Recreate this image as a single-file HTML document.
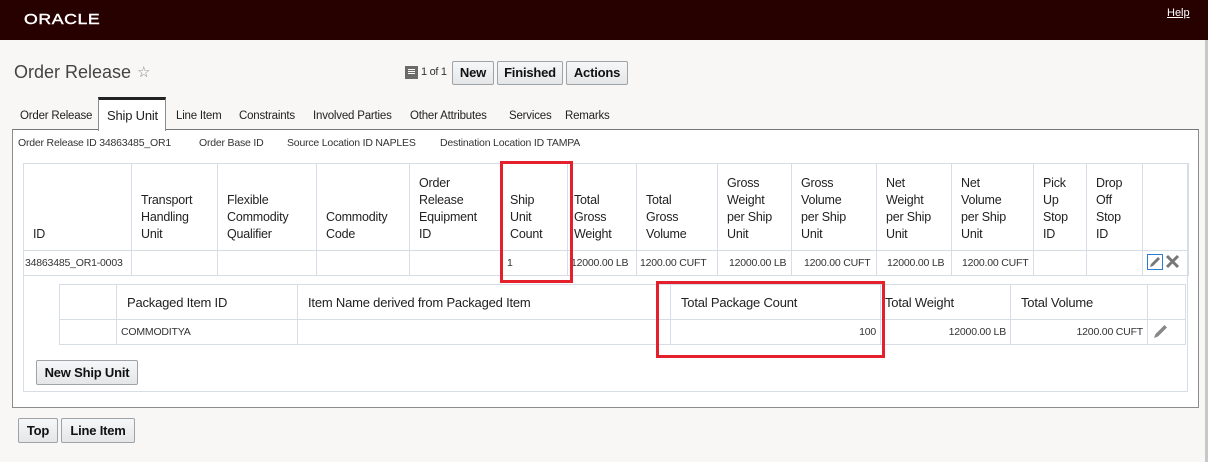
<!DOCTYPE html>
<html><head><meta charset="utf-8">
<style>
*{box-sizing:border-box;margin:0;padding:0}
body{width:1208px;height:462px;background:#f8f7f6;font-family:"Liberation Sans",sans-serif;color:#333;position:relative;overflow:hidden}
.a{position:absolute}
.hdr{left:0;top:0;width:1208px;height:40px;background:#270000}
.logo{left:24px;top:11px;color:#fff;font-size:15px;letter-spacing:0.5px;transform:scaleX(1.18);transform-origin:left;-webkit-text-stroke:0.4px #fff}
.help{left:1167px;top:7px;color:#fff;font-size:11px;text-decoration:underline}
.rb{left:1205px;top:40px;width:3px;height:422px;background:#c8c8c8}
.btn{position:absolute;background:linear-gradient(#f6f7f8,#e4e6e8);border:1px solid #9ea3a7;border-radius:2px;font-weight:bold;font-size:13px;color:#111;text-align:center;line-height:22px;letter-spacing:-0.2px}
.tab{position:absolute;top:110px;font-size:11.5px;color:#222;letter-spacing:-0.2px}
.box{left:12px;top:129px;width:1187px;height:279px;border:1px solid #8c8c8c;border-top:1px solid #777;background:#fff}
.inner{left:23px;top:163px;width:1165px;height:229px;border:1px solid #d6dde6;background:#fff}
table{border-collapse:collapse;position:absolute;table-layout:fixed}
td,th{border:1px solid #d6dde6;font-weight:normal;vertical-align:bottom;text-align:left}
.mt th{font-size:12.5px;line-height:17px;padding:0 0 7px 9px;color:#222;height:87px;white-space:nowrap;letter-spacing:-0.2px}
.mt td{font-size:10.5px;height:25px;vertical-align:middle;padding:0 0 0 3px;color:#333;white-space:nowrap;overflow:hidden;letter-spacing:-0.2px}
.st th{font-size:13px;height:35px;vertical-align:middle;padding-left:10px;color:#222;letter-spacing:-0.2px}
.st td{font-size:10.5px;height:25px;vertical-align:middle;color:#333;padding:0 4px;letter-spacing:-0.2px}
.red{position:absolute;border:3px solid #e3202b}
</style></head><body>
<div class="a hdr"></div>
<div class="a logo">ORACLE</div>
<div class="a help">Help</div>
<div class="a rb"></div>
<div class="a" style="left:14px;top:62px;font-size:18px;color:#444">Order Release</div>
<div class="a" style="left:137px;top:63px;font-size:15px;color:#888">☆</div>
<div class="a" style="left:405px;top:66px;width:13px;height:13px;background:#6b6b6b"><div style="margin:3px 3px;border-top:1px solid #fff;border-bottom:1px solid #fff;height:5px;position:relative"><div style="position:absolute;top:1px;left:0;right:0;border-top:1px solid #fff"></div></div></div>
<div class="a" style="left:421px;top:66px;font-size:11px;color:#333;letter-spacing:-0.3px">1 of 1</div>
<div class="btn" style="left:452px;top:61px;width:42px;height:24px">New</div>
<div class="btn" style="left:497px;top:61px;width:66px;height:24px">Finished</div>
<div class="btn" style="left:566px;top:61px;width:62px;height:24px">Actions</div>

<div class="a box"></div>
<div class="a" style="left:98px;top:97px;width:68px;height:34px;background:#fff;border:1px solid #8c8c8c;border-top:3px solid #222;border-bottom:none"></div>
<div class="tab" style="left:20px">Order Release</div>
<div class="tab" style="left:107px;top:108px;font-size:13px">Ship Unit</div>
<div class="tab" style="left:176px">Line Item</div>
<div class="tab" style="left:239px">Constraints</div>
<div class="tab" style="left:313px">Involved Parties</div>
<div class="tab" style="left:410px">Other Attributes</div>
<div class="tab" style="left:509px">Services</div>
<div class="tab" style="left:565px">Remarks</div>
<div class="a" style="left:18px;top:137px;font-size:10.5px;color:#333;letter-spacing:-0.2px;white-space:nowrap">Order Release ID 34863485_OR1</div>
<div class="a" style="left:199px;top:137px;font-size:10.5px;color:#333;letter-spacing:-0.2px">Order Base ID</div>
<div class="a" style="left:287px;top:137px;font-size:10.5px;color:#333;letter-spacing:-0.2px;white-space:nowrap">Source Location ID NAPLES</div>
<div class="a" style="left:440px;top:137px;font-size:10.5px;color:#333;letter-spacing:-0.2px;white-space:nowrap">Destination Location ID TAMPA</div>

<div class="a inner"></div>
<table class="mt" style="left:23px;top:163px;width:1165px">
<colgroup><col style="width:108px"><col style="width:86px"><col style="width:99px"><col style="width:93px"><col style="width:91px"><col style="width:67px"><col style="width:69px"><col style="width:81px"><col style="width:74px"><col style="width:85px"><col style="width:75px"><col style="width:82px"><col style="width:53px"><col style="width:56px"><col style="width:46px"></colgroup>
<tr><th>ID</th><th>Transport<br>Handling<br>Unit</th><th>Flexible<br>Commodity<br>Qualifier</th><th>Commodity<br>Code</th><th>Order<br>Release<br>Equipment<br>ID</th><th>Ship<br>Unit<br>Count</th><th style="padding-left:6px">Total<br>Gross<br>Weight</th><th>Total<br>Gross<br>Volume</th><th>Gross<br>Weight<br>per Ship<br>Unit</th><th>Gross<br>Volume<br>per Ship<br>Unit</th><th>Net<br>Weight<br>per Ship<br>Unit</th><th>Net<br>Volume<br>per Ship<br>Unit</th><th>Pick<br>Up<br>Stop<br>ID</th><th>Drop<br>Off<br>Stop<br>ID</th><th></th></tr>
<tr><td style="padding-left:1px">34863485_OR1-0003</td><td></td><td></td><td></td><td></td><td style="padding-left:6px">1</td><td>12000.00 LB</td><td>1200.00 CUFT</td><td style="padding-left:11px">12000.00 LB</td><td style="padding-left:12px">1200.00 CUFT</td><td style="padding-left:10px">12000.00 LB</td><td style="padding-left:10px">1200.00 CUFT</td><td></td><td></td>
<td style="padding-left:3px"><svg width="40" height="16" viewBox="0 0 40 16"><rect x="1.5" y="0.5" width="15" height="15" fill="#fff" stroke="#2a7bd1"/><path d="M4 13l1-3 7-7 2 2-7 7z" fill="#777"/><path d="M21 2l11 11M32 2L21 13" stroke="#777" stroke-width="3"/></svg></td></tr>
</table>

<table class="st" style="left:59px;top:284px;width:1126px">
<colgroup><col style="width:57px"><col style="width:181px"><col style="width:373px"><col style="width:210px"><col style="width:130px"><col style="width:137px"><col style="width:38px"></colgroup>
<tr><th></th><th>Packaged Item ID</th><th>Item Name derived from Packaged Item</th><th>Total Package Count</th><th style="padding-left:4px">Total Weight</th><th>Total Volume</th><th></th></tr>
<tr><td></td><td>COMMODITYA</td><td></td><td style="text-align:right">100</td><td style="text-align:right">12000.00 LB</td><td style="text-align:right">1200.00 CUFT</td><td><svg width="18" height="18" viewBox="0 0 18 18"><path d="M2 16l1.5-4 9-9 2.5 2.5-9 9z" fill="#888"/></svg></td></tr>
</table>

<div class="red" style="left:500px;top:161px;width:73px;height:122px"></div>
<div class="red" style="left:656px;top:281px;width:229px;height:77px"></div>

<div class="btn" style="left:36px;top:360px;width:102px;height:25px;line-height:23px">New Ship Unit</div>
<div class="btn" style="left:18px;top:418px;width:40px;height:25px;line-height:23px">Top</div>
<div class="btn" style="left:61px;top:418px;width:74px;height:25px;line-height:23px">Line Item</div>
</body></html>
